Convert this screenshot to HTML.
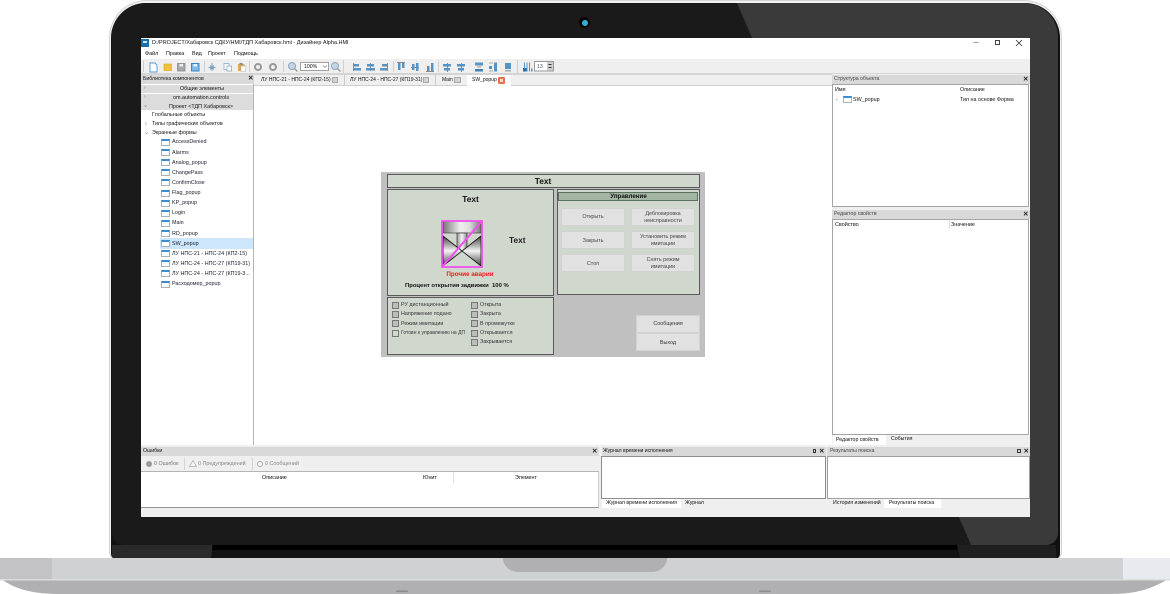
<!DOCTYPE html>
<html lang="ru">
<head>
<meta charset="utf-8">
<title>Дизайнер Alpha.HMI</title>
<style>
html,body{margin:0;padding:0;background:#fff}
#p{position:relative;width:1170px;height:594px;overflow:hidden;background:#fff;font-family:"Liberation Sans","Noto Sans CJK SC",sans-serif}
#p div,#p span.t{position:absolute}
.t{white-space:nowrap;font-size:5.4px;line-height:6px;color:#111}
.b{font-weight:bold}
.c{transform:translateX(-50%)}
#s{left:141px;top:38px;width:889px;height:479px;background:#fff;overflow:hidden}
#s2{left:-141px;top:-38px;width:1170px;height:594px;filter:blur(.3px)}
.g{background:#efefef}
.h{background:#d9d9d9}
.fi{width:7px;height:4px;border:1px solid #a3b2bd;border-top:2px solid #3a8bcf;background:#fff;left:161px}
.box{background:#d0d8ce;border:1px solid #595959;box-sizing:border-box}
.btn{background:#e1e1e1;border:1px solid #d2d2d2;box-sizing:border-box}
.cb{width:7px;height:7px;background:#bcbcb8;border:1px solid #777;box-sizing:border-box}
.x{font-size:7px;line-height:7px;color:#222;font-weight:bold}
</style>
</head>
<body>
<div id="p">
<!-- laptop body -->
<div style="left:109px;top:0;width:953px;height:560px;background:#d4d4d4;border-radius:38px 38px 8px 8px"></div>
<div style="left:110px;top:1px;width:951px;height:558px;background:#f2f2f2;border-radius:37px 37px 7px 7px"></div>
<div style="left:111px;top:3px;width:949px;height:556px;background:#111;border-radius:35px 35px 5px 5px;overflow:hidden">
  <div style="left:1px;top:0;width:946px;height:542px;background:#1a1a1a;border-radius:34px 34px 12px 12px;overflow:hidden">
    <svg width="946" height="542" style="position:absolute;left:0;top:0"><polygon points="625,0 946,0 946,542 859,542" fill="#3a3a3a"/></svg>
  </div>
  <div style="left:1px;top:542px;width:100px;height:13px;background:#2a2a2a"></div>
  <svg width="949" height="14" style="position:absolute;left:0;top:542px"><polygon points="102,0 846,0 849,13 100,13" fill="#131313"/><polygon points="102,0 846,0 847,5 101,5" fill="#000"/><polygon points="846,0 945,0 945,13 849,13" fill="#1f1f1f"/></svg>
</div>
<!-- camera -->
<div style="left:579px;top:17px;width:11px;height:11px;border-radius:50%;background:#050505"></div>
<div style="left:582px;top:19.5px;width:6px;height:6px;border-radius:50%;background:#2fb0d8"></div>
<!-- base -->
<svg width="1170" height="36" style="position:absolute;left:0;top:558px">
  <path d="M0 0H1170V20C1150 32 1135 36 1110 36H60C35 36 15 32 0 20Z" fill="#b0b0b2"/>
  <rect x="0" y="0" width="1170" height="22" fill="#d0d1d3"/>
  <rect x="0" y="0" width="52" height="22" fill="#c3c3c5"/>
  <rect x="1123" y="0" width="47" height="22" fill="#e8eaef"/>
  <rect x="0" y="21" width="1170" height="1.5" fill="#dcdcdc"/>
  <path d="M503 0H667C667 8 660 14 652 14H518C510 14 503 8 503 0Z" fill="#b0b0b2"/>
  <rect x="396" y="32.5" width="12" height="1.6" rx=".8" fill="#8d8d8d"/>
  <rect x="759" y="32.5" width="12" height="1.6" rx=".8" fill="#8d8d8d"/>
</svg>

<div id="s"><div id="s2">
<!-- title & menu -->
<div style="left:141px;top:39px;width:8px;height:8px;background:#1e6fa8"></div>
<div style="left:143px;top:41px;width:4px;height:2px;background:#cfe6f5"></div>
<span class="t" style="left:152px;top:40px;font-size:5.5px">D:/PROJECT/Хабаровск СДКУ/HMI/ТДП Хабаровск.hmi - Дизайнер Alpha.HMI</span>
<span class="t" style="left:145px;top:51px">Файл</span>
<span class="t" style="left:166px;top:51px">Правка</span>
<span class="t" style="left:192px;top:51px">Вид</span>
<span class="t" style="left:208px;top:51px">Проект</span>
<span class="t" style="left:234px;top:51px">Подмощь</span>
<div style="left:973px;top:42px;width:6px;height:1px;background:#aaa"></div>
<div style="left:995px;top:40px;width:5px;height:5px;border:.8px solid #444;box-sizing:border-box"></div>
<svg width="8" height="8" style="position:absolute;left:1015px;top:38.5px"><path d="M1 1L7 7M7 1L1 7" stroke="#333" stroke-width=".8"/></svg>
<!-- toolbar -->
<div class="g" style="left:141px;top:59px;width:889px;height:15px"></div>
<div style="left:141px;top:73px;width:889px;height:1.5px;background:#d4d4d4"></div>
<svg width="1170" height="90" style="position:absolute;left:0;top:0">
  <g fill="none">
    <path d="M150 63h5l2 2v7h-7z" fill="#fff" stroke="#4f9ad6" stroke-width=".9"/>
    <rect x="164" y="64" width="7.5" height="6.5" fill="#f0c23c" stroke="#d9a41e" stroke-width=".6"/>
    <rect x="177.5" y="63.5" width="7.5" height="7.500" fill="#a8a8a8" stroke="#888" stroke-width=".8"/><rect x="179.5" y="64" width="3.5" height="2.5" fill="#eee"/>
    <rect x="191.5" y="63.5" width="7.5" height="7.500" fill="#7fbbe6" stroke="#2f7fc0" stroke-width=".9"/><rect x="193.5" y="64" width="3.5" height="2.5" fill="#e8f3fb"/>
    <path d="M212 63v8M208.500 67.500h7M210 65.500l4 4M214 65.500l-4 4" stroke="#7b9cbd" stroke-width="1"/>
    <rect x="224" y="63.500" width="5" height="6" fill="#fff" stroke="#8eabc7" stroke-width=".8"/><rect x="227" y="66" width="4.500" height="5" fill="#fff" stroke="#8eabc7" stroke-width=".8"/>
    <rect x="238" y="64" width="6.500" height="7" fill="#dcaa55"/><rect x="241" y="66" width="4.500" height="5.500" fill="#fff" stroke="#999" stroke-width=".4"/><rect x="239.500" y="63" width="3" height="1.800" fill="#888"/>
    <circle cx="258" cy="67" r="3" stroke="#999" stroke-width="2"/>
    <circle cx="273" cy="67" r="3" stroke="#999" stroke-width="2"/>
    <circle cx="292" cy="66" r="3.500" fill="#c4d6e6" stroke="#8aa5bf" stroke-width="1"/><path d="M294.500 68.500l3 3" stroke="#999" stroke-width="1.300"/>
    <circle cx="335" cy="66" r="3.500" fill="#c4d6e6" stroke="#8aa5bf" stroke-width="1"/><path d="M337.500 68.500l3 3" stroke="#999" stroke-width="1.300"/>
  </g>
  <rect x="300.500" y="62.500" width="28" height="8" fill="#fff" stroke="#8a8a8a" stroke-width=".8"/>
  <path d="M323 65.500l2 2 2-2" fill="none" stroke="#777" stroke-width=".6"/>
  <!-- separators -->
  <g fill="#cfcfcf">
    <rect x="143" y="61" width="1" height="11"/><rect x="204" y="61" width="1" height="11"/><rect x="249" y="61" width="1" height="11"/><rect x="283" y="61" width="1" height="11"/><rect x="343" y="60" width="1" height="13"/><rect x="393" y="61" width="1" height="11"/><rect x="438" y="61" width="1" height="11"/><rect x="517" y="60" width="1" height="13"/>
  </g>
  <!-- alignment icons -->
  <g fill="#5794c6">
    <rect x="353" y="63" width="1" height="8" fill="#888"/><rect x="354" y="64" width="5" height="2.500"/><rect x="354" y="68" width="7" height="2.500"/>
    <rect x="370" y="63" width="1" height="8" fill="#888"/><rect x="367" y="64" width="7" height="2.500"/><rect x="366" y="68" width="9" height="2.500"/>
    <rect x="387" y="63" width="1" height="8" fill="#888"/><rect x="382" y="64" width="5" height="2.500"/><rect x="380" y="68" width="7" height="2.500"/>
    <rect x="397" y="62" width="8" height="1" fill="#888"/><rect x="398" y="63" width="2.500" height="7"/><rect x="402" y="63" width="2.500" height="5"/>
    <rect x="411" y="67" width="8" height="1" fill="#888"/><rect x="412" y="64" width="2.500" height="6"/><rect x="416" y="63" width="2.500" height="8"/>
    <rect x="426" y="71" width="8" height="1" fill="#888"/><rect x="427" y="66" width="2.500" height="5"/><rect x="431" y="63" width="2.500" height="8"/>
    <rect x="447" y="63" width="1" height="9" fill="#888"/><rect x="443" y="64" width="8" height="2.500"/><rect x="444" y="68" width="6" height="2.500"/>
    <rect x="461" y="63" width="1" height="9" fill="#888"/><rect x="457" y="64" width="8" height="2.500"/><rect x="458" y="68" width="6" height="2.500"/>
    <rect x="475" y="62.500" width="8" height="3"/><rect x="477" y="66" width="4" height="1.500" fill="#bbb"/><rect x="475" y="69" width="8" height="2.500" fill="#3f82b8"/>
    <rect x="494" y="62.500" width="3" height="9"/><rect x="489" y="66" width="3" height="3"/><rect x="489" y="62.500" width="4" height="1" fill="#aaa"/><rect x="489" y="70.500" width="4" height="1" fill="#aaa"/>
    <rect x="505" y="63" width="6" height="6"/><rect x="505" y="70" width="6" height="1.500" fill="#aaa"/>
    <rect x="523" y="68" width="4" height="3.500" fill="#2a6ea6"/><rect x="524" y="62.500" width="1" height="6"/><rect x="526.500" y="62.500" width="1" height="9"/><rect x="529" y="62.500" width="1" height="9"/><rect x="531" y="68.500" width="1.500" height="3"/>
  </g>
  <rect x="534.500" y="61.500" width="19" height="9.500" fill="#fff" stroke="#999" stroke-width="1"/>
  <rect x="547" y="62" width="6" height="8.500" fill="#cfcfcf"/>
  <rect x="548.500" y="64" width="3" height="1" fill="#333"/><rect x="548.500" y="67" width="3" height="1" fill="#333"/>
</svg>
<span class="t" style="left:304px;top:64px;font-size:5.2px">100%</span>
<span class="t" style="left:537px;top:64px;font-size:5.2px;color:#556">13</span>

<!-- left panel -->
<div class="h" style="left:141px;top:74.500px;width:113px;height:9px"></div>
<span class="t" style="left:143px;top:76px;font-size:5.200px">Библиотека компонентов</span>
<span class="t x" style="left:248px;top:75px;font-size:6.500px">✕</span>
<div class="h" style="left:141px;top:84.500px;width:112px;height:8px;background:#dcdcdc"></div>
<div class="h" style="left:141px;top:93.500px;width:112px;height:8px;background:#dcdcdc"></div>
<div class="h" style="left:141px;top:102px;width:112px;height:8px;background:#dcdcdc"></div>
<span class="t" style="left:144px;top:85px;color:#777">›</span>
<span class="t" style="left:144px;top:94px;color:#777">›</span>
<span class="t" style="left:144px;top:103px;color:#555;transform:rotate(90deg)">›</span>
<span class="t c" style="left:202px;top:86px">Общие элементы</span>
<span class="t c" style="left:201px;top:95px">om.automation.controls</span>
<span class="t c" style="left:201px;top:104px">Проект &lt;ТДП Хабаровск&gt;</span>
<div style="left:253px;top:84px;width:1.200px;height:361px;background:#b5b5b5"></div>
<span class="t" style="left:152px;top:112px">Глобальные объекты</span>
<span class="t" style="left:145px;top:121px;color:#555">›</span>
<span class="t" style="left:152px;top:121px">Типы графических объектов</span>
<span class="t" style="left:145px;top:130px;color:#333;transform:rotate(90deg)">›</span>
<span class="t" style="left:152px;top:130px">Экранные формы</span>
<div style="left:160px;top:238px;width:93px;height:11px;background:#cde6fc"></div>
<div class="fi" style="top:139px"></div><span class="t" style="left:172px;top:139px;color:#223">AccessDenied</span>
<div class="fi" style="top:149px"></div><span class="t" style="left:172px;top:150px;color:#223">Alarms</span>
<div class="fi" style="top:159px"></div><span class="t" style="left:172px;top:160px;color:#223">Analog_popup</span>
<div class="fi" style="top:169px"></div><span class="t" style="left:172px;top:170px;color:#223">ChangePass</span>
<div class="fi" style="top:179px"></div><span class="t" style="left:172px;top:180px;color:#223">ConfirmClose</span>
<div class="fi" style="top:190px"></div><span class="t" style="left:172px;top:190px;color:#223">Flag_popup</span>
<div class="fi" style="top:200px"></div><span class="t" style="left:172px;top:200px;color:#223">KP_popup</span>
<div class="fi" style="top:210px"></div><span class="t" style="left:172px;top:210px;color:#223">Login</span>
<div class="fi" style="top:220px"></div><span class="t" style="left:172px;top:220px;color:#223">Main</span>
<div class="fi" style="top:230px"></div><span class="t" style="left:172px;top:231px;color:#223">RD_popup</span>
<div class="fi" style="top:240px"></div><span class="t" style="left:172px;top:241px;color:#223">SW_popup</span>
<div class="fi" style="top:250px"></div><span class="t" style="left:172px;top:251px;color:#223">ЛУ НПС-21 - НПС-24 (КП2-15)</span>
<div class="fi" style="top:260px"></div><span class="t" style="left:172px;top:261px;color:#223">ЛУ НПС-24 - НПС-27 (КП19-31)</span>
<div class="fi" style="top:270px"></div><span class="t" style="left:172px;top:271px;color:#223">ЛУ НПС-24 - НПС-27 (КП19-3...</span>
<div class="fi" style="top:281px"></div><span class="t" style="left:172px;top:281px;color:#223">Расходомер_popup</span>

<!-- tabs -->
<div class="g" style="left:254px;top:74.500px;width:578px;height:11px"></div>
<div style="left:254px;top:85px;width:578px;height:1px;background:#cfcfcf"></div>
<div style="left:344px;top:75px;width:.6px;height:10px;background:#ccc"></div>
<div style="left:435px;top:75px;width:.6px;height:10px;background:#ccc"></div>
<div style="left:467px;top:75px;width:44px;height:10.500px;background:#fff"></div>
<span class="t" style="left:261px;top:77px;font-size:5px">ЛУ НПС-21 - НПС-24 (КП2-15)</span>
<div style="left:332px;top:77px;width:6px;height:6px;background:#d2d2d2;border:.5px solid #aaa;box-sizing:border-box"></div>
<span class="t" style="left:350px;top:77px;font-size:5px">ЛУ НПС-24 - НПС-27 (КП19-31)</span>
<div style="left:423px;top:77px;width:6px;height:6px;background:#d2d2d2;border:.5px solid #aaa;box-sizing:border-box"></div>
<span class="t" style="left:442px;top:77px;font-size:5px">Main</span>
<div style="left:454px;top:77px;width:6.500px;height:6px;background:#d2d2d2;border:.5px solid #aaa;box-sizing:border-box"></div>
<span class="t" style="left:472px;top:77px;font-size:5px">SW_popup</span>
<div style="left:498px;top:76.500px;width:7px;height:7px;background:#e8704e;border-radius:1px"></div>
<div style="left:500px;top:78.500px;width:3px;height:3px;background:#f8ddd5"></div>

<!-- right panels -->
<div class="g" style="left:832px;top:74px;width:198px;height:1px"></div>
<div class="h" style="left:832px;top:74.500px;width:198px;height:9px"></div>
<span class="t" style="left:834px;top:76px;font-size:5.200px;color:#444">Структура объекта</span>
<span class="t x" style="left:1023px;top:75.500px;font-size:6.500px">✕</span>
<div style="left:832px;top:84px;width:197px;height:123px;border:1px solid #a5a5a5;box-sizing:border-box;background:#fff"></div>
<span class="t" style="left:835px;top:87px">Имя</span>
<span class="t" style="left:960px;top:87px">Описание</span>
<span class="t" style="left:836px;top:97px;color:#666">›</span>
<div class="fi" style="left:843px;top:96px"></div>
<span class="t" style="left:853px;top:97px">SW_popup</span>
<span class="t" style="left:960px;top:97px">Тип на основе Форма</span>
<div class="g" style="left:832px;top:207px;width:198px;height:3px"></div>
<div class="h" style="left:832px;top:209.500px;width:198px;height:9px"></div>
<span class="t" style="left:834px;top:211px;font-size:5.200px;color:#444">Редактор свойств</span>
<span class="t x" style="left:1023px;top:210.500px;font-size:6.500px">✕</span>
<div style="left:832px;top:219px;width:197px;height:216px;border:1px solid #a5a5a5;box-sizing:border-box;background:#fff"></div>
<div style="left:949px;top:220px;width:.6px;height:9px;background:#ddd"></div>
<span class="t" style="left:835px;top:222px">Свойство</span>
<span class="t" style="left:951px;top:222px">Значение</span>
<div class="g" style="left:832px;top:435px;width:198px;height:11px"></div>
<div style="left:833px;top:435px;width:53px;height:10px;background:#fff"></div>
<span class="t" style="left:836px;top:437px;font-size:5.200px">Редактор свойств</span>
<span class="t" style="left:891px;top:436px;font-size:5.200px">События</span>

<!-- bottom -->
<div class="g" style="left:141px;top:445px;width:889px;height:72px"></div>
<div class="h" style="left:141px;top:446.500px;width:458px;height:9px"></div>
<span class="t" style="left:143px;top:448px;font-size:5.200px">Ошибки</span>
<span class="t x" style="left:592px;top:447.500px;font-size:6.500px">✕</span>
<div style="left:146px;top:461px;width:6px;height:6px;border-radius:50%;background:#999"></div>
<span class="t" style="left:154px;top:461px;color:#777">0 Ошибок</span>
<div style="left:184px;top:458px;width:.7px;height:12px;background:#d4d4d4"></div>
<svg width="8" height="7" style="position:absolute;left:188.500px;top:460px"><path d="M4 .5L7.500 6.500H.5Z" fill="#f4f4f4" stroke="#aaa" stroke-width=".7"/></svg>
<span class="t" style="left:198px;top:461px;color:#888">0 Предупреждений</span>
<div style="left:252px;top:458px;width:.7px;height:12px;background:#d4d4d4"></div>
<div style="left:257px;top:461px;width:6px;height:6px;border-radius:50%;border:.7px solid #aaa;box-sizing:border-box;background:#f6f6f6"></div>
<span class="t" style="left:265px;top:461px;color:#888">0 Сообщений</span>
<div style="left:141px;top:471px;width:458px;height:37px;background:#fff;border-top:1px solid #b4b4b4;border-bottom:1px solid #969696;border-right:1px solid #ccc;box-sizing:border-box"></div>
<div style="left:453px;top:472px;width:.6px;height:11px;background:#ddd"></div>
<span class="t" style="left:262px;top:475px">Описание</span>
<span class="t" style="left:423px;top:475px">Юнит</span>
<span class="t" style="left:515px;top:475px">Элемент</span>

<div class="h" style="left:602px;top:446.500px;width:224px;height:9px"></div>
<span class="t" style="left:603px;top:448px;font-size:5.100px">Журнал времени исполнения</span>
<div style="left:812.500px;top:449px;width:3.500px;height:3.500px;border:1px solid #333;box-sizing:border-box"></div>
<span class="t x" style="left:819px;top:447.500px;font-size:6.500px">✕</span>
<div style="left:601px;top:456px;width:225px;height:43px;background:#fff;border:1px solid #8e8e8e;box-sizing:border-box"></div>
<div style="left:602px;top:499px;width:79px;height:9px;background:#fff"></div>
<span class="t" style="left:606px;top:500px;font-size:5.200px">Журнал времени исполнения</span>
<span class="t" style="left:685px;top:500px;font-size:5.200px">Журнал</span>

<div class="h" style="left:827px;top:446.500px;width:203px;height:9px"></div>
<span class="t" style="left:830px;top:448px;font-size:5.100px;color:#444">Результаты поиска</span>
<div style="left:1017px;top:449px;width:3.500px;height:3.500px;border:1px solid #333;box-sizing:border-box"></div>
<span class="t x" style="left:1023.500px;top:447.500px;font-size:6.500px">✕</span>
<div style="left:827px;top:456px;width:203px;height:43px;background:#fff;border:1px solid #a0a0a0;box-sizing:border-box"></div>
<span class="t" style="left:833px;top:500px;font-size:5.200px">История изменений</span>
<div style="left:884px;top:499px;width:57px;height:9px;background:#fff"></div>
<span class="t" style="left:889px;top:500px;font-size:5.200px">Результаты поиска</span>

<!-- HMI form -->
<div style="left:381px;top:172px;width:324px;height:185px;background:#c0c0c0"></div>
<div class="box" style="left:387px;top:174px;width:313px;height:14px"></div>
<span class="t b c" style="left:543px;top:176px;font-size:8.400px;line-height:10px;color:#111">Text</span>
<div class="box" style="left:387px;top:189px;width:167px;height:107px"></div>
<span class="t b c" style="left:470.500px;top:194px;font-size:8.400px;line-height:10px;color:#111">Text</span>
<span class="t b" style="left:509px;top:235px;font-size:8.400px;line-height:10px;color:#222">Text</span>
<div class="box" style="left:557px;top:189px;width:143px;height:106px"></div>
<div style="left:558px;top:191.500px;width:140px;height:9.500px;background:#a3b5a3;border:1px solid #59705d;box-sizing:border-box"></div>
<span class="t b c" style="left:628.500px;top:193.500px;font-size:6.200px">Управление</span>
<div class="btn" style="left:561px;top:208px;width:64px;height:18px"></div>
<div class="btn" style="left:631px;top:208px;width:64px;height:18px"></div>
<div class="btn" style="left:561px;top:231px;width:64px;height:18px"></div>
<div class="btn" style="left:631px;top:231px;width:64px;height:18px"></div>
<div class="btn" style="left:561px;top:254px;width:64px;height:18px"></div>
<div class="btn" style="left:631px;top:254px;width:64px;height:18px"></div>
<span class="t c" style="left:593px;top:214px;color:#444">Открыть</span>
<span class="t c" style="left:663px;top:211px;color:#444">Деблокировка</span>
<span class="t c" style="left:663px;top:217.500px;color:#444">неисправности</span>
<span class="t c" style="left:593px;top:238px;color:#444">Закрыть</span>
<span class="t c" style="left:663px;top:234px;color:#444">Установить режим</span>
<span class="t c" style="left:663px;top:240.500px;color:#444">имитации</span>
<span class="t c" style="left:593px;top:261px;color:#444">Стоп</span>
<span class="t c" style="left:663px;top:257px;color:#444">Снять режим</span>
<span class="t c" style="left:663px;top:263.500px;color:#444">имитации</span>

<svg width="44" height="50" viewBox="0 0 44 50" style="position:absolute;left:440px;top:219px">
  <defs>
    <linearGradient id="a" x1="0" x2="1" y1="0" y2="0"><stop offset="0" stop-color="#777"/><stop offset=".45" stop-color="#eee"/><stop offset=".7" stop-color="#ddd"/><stop offset="1" stop-color="#777"/></linearGradient>
    <linearGradient id="d" x1="0" x2="0" y1="0" y2="1"><stop offset="0" stop-color="#444"/><stop offset=".5" stop-color="#f2f2f2"/><stop offset="1" stop-color="#444"/></linearGradient>
    <linearGradient id="e" x1="0" x2="1" y1="0" y2="0"><stop offset="0" stop-color="#999"/><stop offset=".5" stop-color="#f4f4f4"/><stop offset="1" stop-color="#888"/></linearGradient>
  </defs>
  <rect x="2" y="2" width="40" height="46" fill="#d0d8ce"/>
  <rect x="3" y="2" width="38" height="12" fill="url(#a)" stroke="#333" stroke-width=".6"/>
  <rect x="17" y="14" width="10" height="18" fill="url(#e)" stroke="#333" stroke-width=".7"/>
  <path d="M3 17L22 32L3 47Z" fill="url(#d)" stroke="#111" stroke-width=".8"/>
  <path d="M41 17L22 32L41 47Z" fill="url(#d)" stroke="#111" stroke-width=".8"/>
  <rect x="2" y="2" width="40" height="46" fill="none" stroke="#f050f0" stroke-width="1.800"/>
  <path d="M2 48L42 2" stroke="#f050f0" stroke-width="2"/>
</svg>

<span class="t b c" style="left:470px;top:272px;font-size:6.300px;color:#f01818">Прочие аварии</span>
<span class="t b" style="left:405px;top:283px;font-size:5.900px;color:#111">Процент открытия задвижки&nbsp; 100 %</span>

<div class="box" style="left:387px;top:297px;width:167px;height:58px"></div>
<div class="cb" style="left:392px;top:302px"></div><span class="t" style="left:401px;top:302px;color:#333">РУ дистанционный</span>
<div class="cb" style="left:392px;top:311px"></div><span class="t" style="left:401px;top:311px;color:#333">Напряжение подано</span>
<div class="cb" style="left:392px;top:320px"></div><span class="t" style="left:401px;top:320.500px;color:#333">Режим имитации</span>
<div class="cb" style="left:392px;top:330px;background:#d0d8ce"></div><span class="t" style="left:401px;top:330px;color:#333;font-size:5px">Готовн к управлению на ДП</span>
<div class="cb" style="left:471px;top:302px"></div><span class="t" style="left:480px;top:302px;color:#333">Открыта</span>
<div class="cb" style="left:471px;top:311px"></div><span class="t" style="left:480px;top:311px;color:#333">Закрыта</span>
<div class="cb" style="left:471px;top:320px"></div><span class="t" style="left:480px;top:320.500px;color:#333">В промежутке</span>
<div class="cb" style="left:471px;top:330px"></div><span class="t" style="left:480px;top:330px;color:#333">Открывается</span>
<div class="cb" style="left:471px;top:339px"></div><span class="t" style="left:480px;top:339px;color:#333">Закрывается</span>

<div class="btn" style="left:636px;top:314.500px;width:64px;height:18px"></div>
<div class="btn" style="left:636px;top:333px;width:64px;height:18px"></div>
<span class="t c" style="left:668px;top:321px;color:#333">Сообщения</span>
<span class="t c" style="left:668px;top:339.500px;color:#333">Выход</span>
</div></div>
</div>
</body>
</html>
